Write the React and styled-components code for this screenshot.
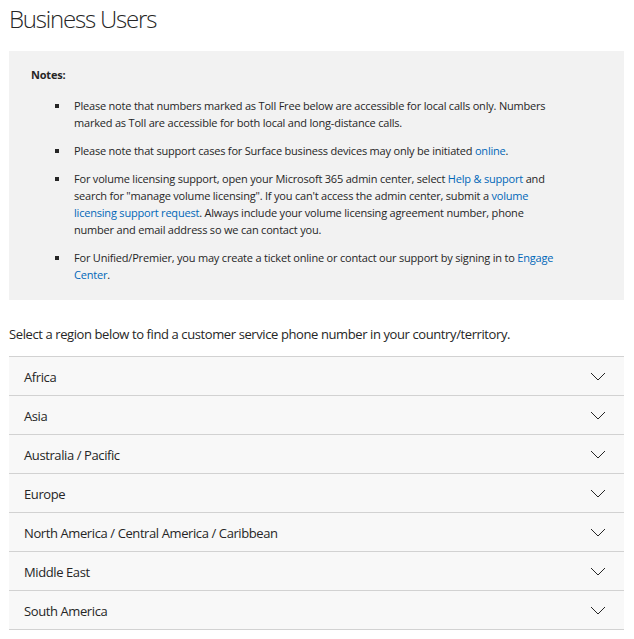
import React from "react";
import styled, { createGlobalStyle } from "styled-components";

const GlobalStyle = createGlobalStyle`
  html, body { margin: 0; padding: 0; background: #fff; }
  body { font-family: "Open Sans", "Noto Sans", sans-serif; color: #262626; }
`;

const Page = styled.div`
  padding: 0 10px 0 9px;
`;

const Title = styled.h1`
  margin: 0;
  padding-top: 4px;
  font-size: 24px;
  line-height: 30px;
  font-weight: 300;
  letter-spacing: -1.2px;
  color: #262626;
`;

const NotesBox = styled.section`
  margin-top: 17px;
  background: #f2f2f2;
  padding: 15px 60px 17px 22px;
  font-size: 11px;
  line-height: 17px;
  letter-spacing: -0.2px;
`;

const NotesLabel = styled.div`
  font-weight: 700;
`;

const List = styled.ul`
  list-style: none;
  margin: 14px 0 0;
  padding: 0 0 0 24px;
  display: flex;
  flex-direction: column;
  gap: 11px;
`;

const Item = styled.li`
  display: flex;
  align-items: flex-start;
`;

const Bullet = styled.span`
  flex: none;
  width: 4px;
  height: 4px;
  background: #262626;
  margin: 7px 15px 0 0;
`;

const Link = styled.a`
  color: #0067b8;
  text-decoration: none;
`;

const Intro = styled.p`
  margin: 24px 0 0;
  font-size: 13px;
  line-height: 20px;
  letter-spacing: -0.4px;
`;

const Accordion = styled.div`
  margin-top: 12px;
  border-top: 1px solid #d2d2d2;
`;

const Row = styled.button`
  all: unset;
  box-sizing: border-box;
  width: 100%;
  height: 39px;
  display: flex;
  align-items: center;
  justify-content: space-between;
  padding: 1px 18px 0 15px;
  background: #f8f8f8;
  border-bottom: 1px solid #d2d2d2;
  font-size: 13px;
  letter-spacing: -0.4px;
  color: #262626;
  cursor: pointer;
`;

const Chevron = () => (
  <svg width="16" height="9" viewBox="0 0 16 9" fill="none">
    <polyline points="1,1 8,8 15,1" stroke="#262626" strokeWidth="1" />
  </svg>
);

const regions = [
  "Africa",
  "Asia",
  "Australia / Pacific",
  "Europe",
  "North America / Central America / Caribbean",
  "Middle East",
  "South America",
];

export default function App() {
  return (
    <>
      <GlobalStyle />
      <Page>
        <Title>Business Users</Title>
        <NotesBox>
          <NotesLabel>Notes:</NotesLabel>
          <List>
            <Item>
              <Bullet />
              <span>
                Please note that numbers marked as Toll Free below are accessible for local calls only. Numbers marked as Toll are accessible for both local and long-distance calls.
              </span>
            </Item>
            <Item>
              <Bullet />
              <span>
                Please note that support cases for Surface business devices may only be initiated <Link href="#">online</Link>.
              </span>
            </Item>
            <Item>
              <Bullet />
              <span>
                For volume licensing support, open your Microsoft 365 admin center, select <Link href="#">Help &amp; support</Link> and search for "manage volume licensing". If you can't access the admin center, submit a <Link href="#">volume licensing support request</Link>. Always include your volume licensing agreement number, phone number and email address so we can contact you.
              </span>
            </Item>
            <Item>
              <Bullet />
              <span>
                For Unified/Premier, you may create a ticket online or contact our support by signing in to <Link href="#">Engage Center</Link>.
              </span>
            </Item>
          </List>
        </NotesBox>
        <Intro>Select a region below to find a customer service phone number in your country/territory.</Intro>
        <Accordion>
          {regions.map((r) => (
            <Row key={r}>
              <span>{r}</span>
              <Chevron />
            </Row>
          ))}
        </Accordion>
      </Page>
    </>
  );
}
